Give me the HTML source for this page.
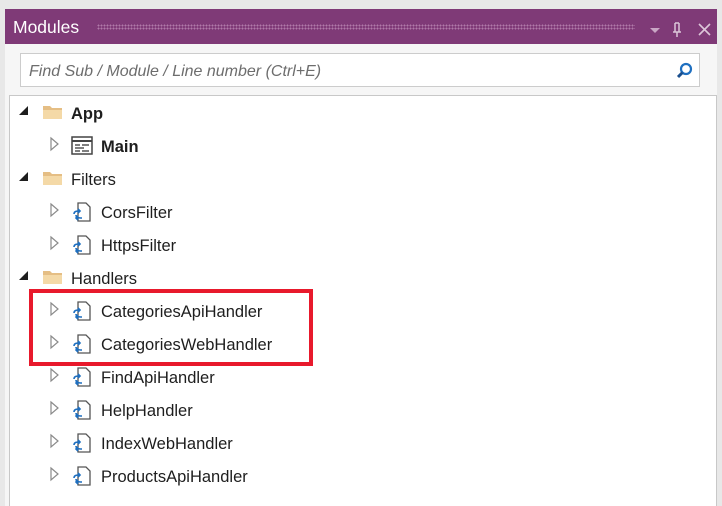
<!DOCTYPE html>
<html><head><style>
html,body{margin:0;width:722px;height:506px;overflow:hidden}
body{background:#e8e8e8;position:relative;font-family:"Liberation Sans",sans-serif}
.p{position:absolute}
.title{left:5px;top:9px;width:712px;height:35px;background:#7f3a77}
.body{left:5px;top:44px;width:712px;height:462px;background:#f6f6f6}
.search{left:20px;top:53px;width:680px;height:34px;background:#fff;border:1px solid #ccc;box-sizing:border-box}
.tree{left:9px;top:95px;width:708px;height:411px;background:#fff;border:1px solid #c8c8c8;border-bottom:none;box-sizing:border-box}
.t{position:absolute;font-size:16.5px;color:#1e1e1e;white-space:nowrap;line-height:20px}
.b{font-weight:bold}
</style></head><body>
<div class="p title"></div>
<div class="p" style="left:13px;top:17px;color:#fff;font-size:17.5px;line-height:20px">Modules</div>
<div class="p" style="left:97px;top:24px;width:538px;height:6px;background-image:radial-gradient(circle,#b07aa9 0.8px,transparent 1px);background-size:3px 3px"></div>
<svg class="p" style="left:648px;top:21px" width="68" height="18"><path d="M2 7h10l-5 5z" fill="#c9a6c5"/><path d="M27 2v9M31 2v9M27 2h4M25 11h8M29 11v5" stroke="#dcc6d9" stroke-width="1.5" fill="none"/><path d="M51 3l11 11M62 3l-11 11" stroke="#dcc6d9" stroke-width="1.6"/></svg>
<div class="p body"></div>
<div class="p search"></div>
<div class="p" style="left:29px;top:62px;font-style:italic;color:#6d6d6d;font-size:16px;line-height:20px">Find Sub / Module / Line number (Ctrl+E)</div>
<svg class="p" style="left:675px;top:61px" width="20" height="20"><circle cx="11" cy="8" r="5" stroke="#1e6fc0" stroke-width="2.2" fill="none"/><path d="M7.5 11.5L3 16" stroke="#1a4f8e" stroke-width="3"/></svg>
<div class="p tree"></div>
<svg class="p" style="left:0;top:96px" width="100" height="410">
<defs>
<g id="fo"><path d="M0 4h7l2 2h10v11H0z" fill="#e5be84"/><path d="M0 8h19v9H0z" fill="#f4d9a7"/></g>
<g id="ex"><path d="M0 0l7 6-7 6z" fill="none" stroke="#8a8a8a" stroke-width="1.2"/></g>
<g id="ar"><path d="M9 0v9H0z" fill="#1e1e1e"/></g>
<g id="fi"><path d="M6 1h8l4 4v14H6z" fill="#fff" stroke="#555" stroke-width="1.3"/><path d="M2 12c0-3 3-3 6-3M6 7l2 2-2 2M10 16c-3 0-6 0-6-3M6 14l-2 2 2 2" stroke="#1e6fc0" stroke-width="1.6" fill="none"/></g>
</defs>
<use href="#ar" x="19" y="10"/><use href="#fo" x="43" y="6"/>
<use href="#ex" x="51" y="42"/>
<g transform="translate(72,41)"><rect x="0" y="0" width="20" height="17" fill="#fff" stroke="#444" stroke-width="1.5"/><path d="M0 4h20" stroke="#444" stroke-width="2"/><path d="M3 8h5M10 8h7M3 11h9M3 14h5M10 14h7" stroke="#555" stroke-width="1.4"/></g>
<use href="#ar" x="19" y="76"/><use href="#fo" x="43" y="72"/>
<use href="#ex" x="51" y="108"/><use href="#fi" x="72" y="106"/>
<use href="#ex" x="51" y="141"/><use href="#fi" x="72" y="139"/>
<use href="#ar" x="19" y="175"/><use href="#fo" x="43" y="171"/>
<use href="#ex" x="51" y="207"/><use href="#fi" x="72" y="205"/>
<use href="#ex" x="51" y="240"/><use href="#fi" x="72" y="238"/>
<use href="#ex" x="51" y="273"/><use href="#fi" x="72" y="271"/>
<use href="#ex" x="51" y="306"/><use href="#fi" x="72" y="304"/>
<use href="#ex" x="51" y="339"/><use href="#fi" x="72" y="337"/>
<use href="#ex" x="51" y="372"/><use href="#fi" x="72" y="370"/>
</svg>
<div class="t b" style="left:71px;top:104px">App</div>
<div class="t b" style="left:101px;top:137px">Main</div>
<div class="t" style="left:71px;top:170px">Filters</div>
<div class="t" style="left:101px;top:203px">CorsFilter</div>
<div class="t" style="left:101px;top:236px">HttpsFilter</div>
<div class="t" style="left:71px;top:269px">Handlers</div>
<div class="t" style="left:101px;top:302px">CategoriesApiHandler</div>
<div class="t" style="left:101px;top:335px">CategoriesWebHandler</div>
<div class="t" style="left:101px;top:368px">FindApiHandler</div>
<div class="t" style="left:101px;top:401px">HelpHandler</div>
<div class="t" style="left:101px;top:434px">IndexWebHandler</div>
<div class="t" style="left:101px;top:467px">ProductsApiHandler</div>
<div class="p" style="left:29px;top:289px;width:284px;height:77px;border:4px solid #e8192c;box-sizing:border-box"></div>
</body></html>
